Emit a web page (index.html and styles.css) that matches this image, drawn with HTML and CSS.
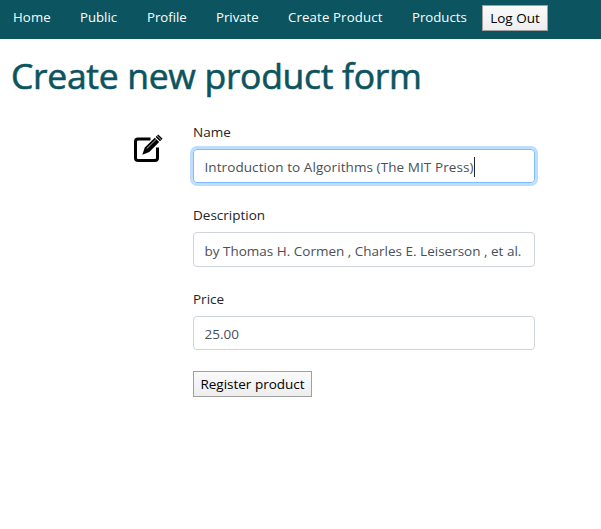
FILE: index.html
```
<!DOCTYPE html>
<html lang="en">
<head>
<meta charset="utf-8">
<title>Create Product</title>
<link rel="stylesheet" href="styles.css">
</head>
<body>
<nav class="navbar">
  <a class="nav-home">Home</a>
  <a class="nav-public">Public</a>
  <a class="nav-profile">Profile</a>
  <a class="nav-private">Private</a>
  <a class="nav-create">Create Product</a>
  <a class="nav-products">Products</a>
  <button class="button logout" type="button">Log Out</button>
</nav>
<main>
  <h1>Create new product form</h1>
  <div class="content">
    <svg class="edit-icon" viewBox="0 0 30 30" aria-hidden="true">
      <path d="M16.5 5H4.1Q1.5 5 1.5 7.6V23.9Q1.5 26.5 4.1 26.5H20.9Q23.5 26.5 23.5 23.9V13.5" fill="none" stroke="#000" stroke-width="3"/>
      <path d="M8.3 20.8 10.8 13.5 20.8 3.7 25.2 8 15.3 18Z" fill="#000" stroke="#fff" stroke-width="1.6" paint-order="stroke"/>
      <path d="M21.6 2.9 24.2 .4 28.6 4.7 26 7.2Z" fill="#000"/>
      <path d="M12.7 14.7 22.3 5.2M23 1.7 27.3 5.9" fill="none" stroke="#fff" stroke-width=".7"/>
    </svg>
    <form class="form">
      <label for="name">Name</label>
      <div class="field focused"><span class="value title-value" id="name">Introduction to Algorithms (The MIT Press)</span><span class="caret"></span></div>
      <label for="description">Description</label>
      <div class="field description"><span class="value description-value" id="description">by Thomas H. Cormen , Charles E. Leiserson , et al.</span></div>
      <label for="price">Price</label>
      <div class="field price"><span class="value" id="price">25.00</span></div>
      <button class="button register" type="button">Register product</button>
    </form>
  </div>
</main>
</body>
</html>
```
FILE: styles.css
```
* { box-sizing: border-box; }
body {
  margin: 0;
  background: #fff;
  color: #212529;
  font: 13.5px/22px "Open Sans", "Noto Sans", sans-serif;
}
.navbar {
  display: grid;
  grid-template-columns: 67px 67px 69px 72px 124px 70px 66px;
  height: 39px;
  padding: 5px 0 0 13px;
  background: #0c545f;
  color: #fff;
  white-space: nowrap;
}
.navbar a { margin-top: 1px; font-size: 13.2px; }
.navbar .nav-home, .navbar .nav-create { letter-spacing: .15px; }
.button {
  height: 26px;
  padding: 0;
  border: 1px solid #a0a0a0;
  border-radius: 0;
  background: linear-gradient(#fafafa, #eee);
  color: #000;
  font: 13.5px/22px "Open Sans", "Noto Sans", sans-serif;
}
h1 {
  margin: 15px 0 0 11px;
  color: #0c545f;
  font-size: 35.5px;
  line-height: 43px;
  font-weight: 400;
  letter-spacing: -.3px;
  -webkit-text-stroke: .6px #0c545f;
  white-space: nowrap;
}
.content { display: flex; margin-top: 24px; padding-left: 134px; }
.edit-icon { width: 30px; height: 30px; margin: 13px 29px 0 0; }
.form { width: 342px; }
label { display: block; height: 28px; }
.field {
  display: flex;
  align-items: center;
  height: 35px;
  margin-bottom: 20px;
  padding: 1px 11px 0 10.5px;
  border: 1px solid #ced4da;
  border-radius: 4px;
  color: #495057;
  white-space: nowrap;
}
.focused { height: 34px; margin-bottom: 21px; border-color: #80bdff; box-shadow: 0 0 0 3px #bfdeff; }
.description { margin-bottom: 21px; padding-top: 2px; }
.title-value { letter-spacing: .08px; }
.price { height: 34px; margin-bottom: 21px; }
.caret { width: 1px; height: 20px; background: #212529; }
.register { width: 119px; }
```
